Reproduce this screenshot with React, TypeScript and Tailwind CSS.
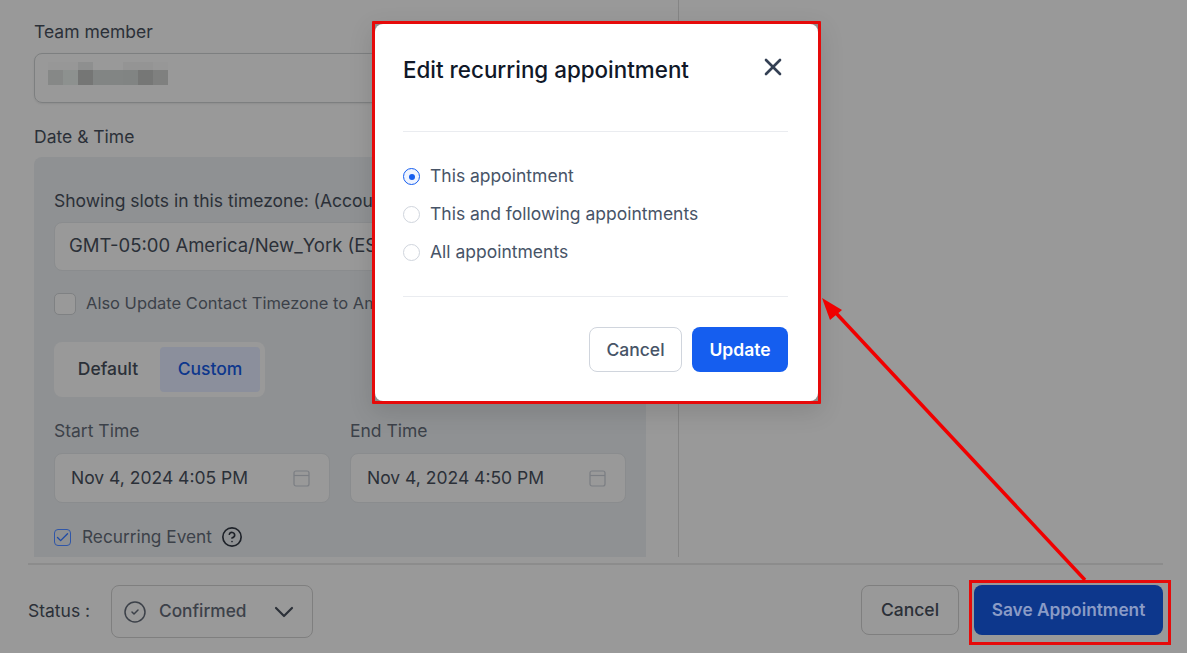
import { Check, CheckCircle2, ChevronDown, HelpCircle, X } from "lucide-react";

const blurBlocks = [
  { c: "bg-[#868887]", top: "bg-[#979797]" },
  { c: "bg-[#8d918f]", top: "bg-[#979797]" },
  { c: "bg-[#757675]", top: "bg-[#8e8f8f]" },
  { c: "bg-[#828584]", top: "bg-[#999999]" },
  { c: "bg-[#828584]", top: "bg-[#999999]" },
  { c: "bg-[#818483]", top: "bg-[#949494]" },
  { c: "bg-[#767776]", top: "bg-[#949494]" },
  { c: "bg-[#7f807f]", top: "bg-[#979797]" },
];

function DateField({ value }: { value: string }) {
  return (
    <div className="flex h-[50px] w-[276px] items-center justify-between rounded-lg border border-[#8a8c8e] bg-[#999999] pl-[16px] pr-[19px] text-[17.5px] text-[#2b3038]">
      <span>{value}</span>
      <svg width="17" height="17" viewBox="0 0 17 17" fill="none" stroke="#7b7e83" strokeWidth="1.2">
        <rect x="1" y="1" width="15" height="15" rx="2" />
        <path d="M1 5.5h15" />
      </svg>
    </div>
  );
}

function Radio({ label, checked }: { label: string; checked?: boolean }) {
  return (
    <label className="flex h-[38px] items-center gap-[10px] text-[17.5px] text-[#475467]">
      <span
        className={
          checked
            ? "flex h-[17px] w-[17px] items-center justify-center rounded-full border border-[#155eef] bg-[#eff4ff]"
            : "h-[17px] w-[17px] rounded-full border border-[#d0d5dd]"
        }
      >
        {checked && <span className="h-[6px] w-[6px] rounded-full bg-[#155eef]" />}
      </span>
      {label}
    </label>
  );
}

function RecurringModal() {
  return (
    <div className="absolute left-[372px] top-[21px] flex h-[383px] w-[449px] flex-col rounded-[1px] border-[3px] border-[#e60a0a] bg-[#8f8f8f] shadow-[0_8px_24px_rgba(0,0,0,0.12)]">
      <div className="flex h-full flex-col rounded-lg bg-white pl-[28px] pr-[30px]">
        <div className="flex h-[108px] shrink-0 items-start justify-between border-b border-[#eaecf0] pt-[28px]">
          <h2 className="text-[22.4px] font-medium leading-[36px] text-[#101828]">Edit recurring appointment</h2>
          <X className="mr-[1px] mt-[1px] text-[#344054]" size={28} strokeWidth={2.3} />
        </div>
        <div className="flex h-[165px] shrink-0 flex-col justify-center border-b border-[#eaecf0] pt-[1px]">
          <Radio label="This appointment" checked />
          <Radio label="This and following appointments" />
          <Radio label="All appointments" />
        </div>
        <div className="flex justify-end gap-[10px] pt-[30px]">
          <button className="h-[45px] w-[93px] rounded-lg border border-[#d0d5dd] bg-white pt-[1px] text-[17.5px] font-medium text-[#475467]">
            Cancel
          </button>
          <button className="h-[45px] w-[96px] rounded-lg bg-[#155eef] pt-[1px] text-[17.5px] font-semibold text-white">
            Update
          </button>
        </div>
      </div>
    </div>
  );
}

export default function App() {
  return (
    <div className="relative h-[653px] w-[1187px] overflow-hidden bg-[#999999] font-['Inter',sans-serif]">
      <div className="flex h-[557px]">
        <div className="h-full w-[679px] shrink-0 border-r border-[#858585] pl-[34px] pr-[32px]">
          <div className="pt-[20px] text-[17.5px] font-normal leading-[24px] text-[#2b3038]">Team member</div>
          <div className="mt-[9px] flex h-[50px] w-[500px] items-center rounded-lg border border-[#7d7f80] pb-[9px] pl-[13px] shadow-[0_1px_2px_rgba(0,0,0,0.08)]">
            {blurBlocks.map((b, i) => (
              <div key={i} className="w-[15px]">
                <div className={`h-[8px] ${b.top}`} />
                <div className={`h-[15px] ${b.c}`} />
              </div>
            ))}
          </div>
          <div className="mt-[22px] text-[17.5px] leading-[24px] text-[#2b3038]">Date &amp; Time</div>
          <div className="mt-[8px] h-[400px] overflow-hidden rounded-t-lg bg-[#8f9193] px-[20px] pt-[32px]">
            <div className="text-[17.5px] leading-[24px] text-[#2b3038]">
              Showing slots in this timezone: (Account Timezone)
            </div>
            <div className="mt-[9px] flex h-[49px] items-center rounded-lg border border-[#8a8c8e] bg-[#999999] pb-[2px] pl-[14px] text-[18.5px] text-[#2b3038]">
              GMT-05:00 America/New_York (EST)
            </div>
            <div className="mt-[21px] flex h-[22px] items-center gap-[10px] pt-[1px] text-[16.5px] text-[#3c4149]">
              <span className="h-[22px] w-[22px] rounded-[5px] border border-[#7f8183] bg-[#999999]" />
              Also Update Contact Timezone to America/New_York
            </div>
            <div className="mt-[28px] flex h-[55px] w-[211px] items-center rounded-lg bg-[#999999] p-[5px] text-[17.5px] font-medium">
              <span className="flex h-[45px] w-[101px] items-center justify-center pr-[3px] text-[#2b3038]">Default</span>
              <span className="flex h-[45px] w-[100px] items-center justify-center rounded bg-[#8b8f9c] text-[#0d378c]">Custom</span>
            </div>
            <div className="mt-[22px] flex gap-[20px]">
              <div>
                <div className="text-[17.5px] leading-[24px] text-[#3c4149]">Start Time</div>
                <div className="mt-[10px]"><DateField value="Nov 4, 2024 4:05 PM" /></div>
              </div>
              <div>
                <div className="text-[17.5px] leading-[24px] text-[#3c4149]">End Time</div>
                <div className="mt-[10px]"><DateField value="Nov 4, 2024 4:50 PM" /></div>
              </div>
            </div>
            <div className="mt-[24px] flex h-[20px] items-center text-[17.25px] text-[#3c4149]">
              <span className="flex h-[17px] w-[17px] items-center justify-center rounded-[4px] border border-[#2f56a8] bg-[#8f9193]">
                <Check className="text-[#1f4aa5]" size={15} strokeWidth={2.2} />
              </span>
              <span className="ml-[11px]">Recurring Event</span>
              <HelpCircle className="ml-[9px] text-[#1e2229]" size={22} strokeWidth={1.8} />
            </div>
          </div>
        </div>
      </div>

      <div className="mx-[28px] mt-[6px] flex h-[75px] w-[1135px] items-start justify-between border-t-2 border-[#8c8c8c] pt-[20px]">
        <div className="flex items-center">
          <span className="w-[83px] text-[17.5px] text-[#2b3038]">Status :</span>
          <div className="flex h-[53px] w-[202px] items-center rounded-lg border border-[#7f7f7f] pl-[11px] text-[17.3px] font-medium text-[#3c4149]">
            <CheckCircle2 className="text-[#3c4149]" size={24} strokeWidth={1.5} />
            <span className="mb-[2px] ml-[12px]">Confirmed</span>
            <ChevronDown className="ml-[21px] text-[#2b3038]" size={32} strokeWidth={1.6} />
          </div>
        </div>
        <div className="flex gap-[15px]">
          <button className="h-[50px] w-[98px] rounded-lg border border-[#7f7f7f] text-[17.5px] font-medium text-[#2b3038]">
            Cancel
          </button>
          <button className="h-[50px] w-[189px] rounded-lg bg-[#0d378c] text-[17.3px] font-semibold text-[#8a9bc6]">
            Save Appointment
          </button>
        </div>
      </div>

      <RecurringModal />

      <div className="absolute left-[969px] top-[580px] h-[65px] w-[202px] border-[3px] border-[#e60a0a]" />

      <svg className="absolute left-[815px] top-[290px]" width="280" height="295" viewBox="0 0 280 295" fill="none">
        <path d="M270 290 L20 22" stroke="#f00000" strokeWidth="3.5" />
        <path d="M7 8 L27 20 L15 30 Z" fill="#f00000" />
      </svg>
    </div>
  );
}
